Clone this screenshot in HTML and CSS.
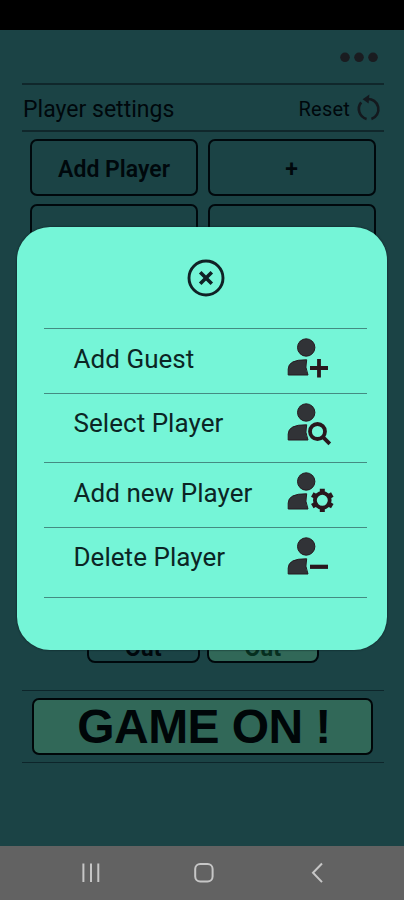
FILE: index.html
```html
<!DOCTYPE html>
<html lang="en">
<head>
<meta charset="utf-8">
<title>Player settings</title>
<link rel="stylesheet" href="styles.css">
</head>
<body>
<div class="phone">
  <div class="status"></div>
  <main class="app">
    <div class="topbar">
      <svg width="40" height="12" viewBox="0 0 40 12" fill="#1a1c20"><circle cx="6" cy="6.3" r="4.8"/><circle cx="20" cy="6.3" r="4.8"/><circle cx="34" cy="6.3" r="4.8"/></svg>
    </div>
    <div class="heading">
      <span class="title">Player settings</span>
      <span class="reset">Reset</span>
      <svg class="reset-icon" width="26" height="28" viewBox="0 0 26 28"><path d="M10.6 25A10.4 10.4 0 0 1 5.2 8.4M11 5A10.3 10.3 0 0 1 15.4 25" fill="none" stroke="#14191e" stroke-width="2.6"/><path d="M6.6 5.2L13.4 .6L12.6 9.6Z" fill="#14191e"/></svg>
    </div>
    <div class="players">
      <div class="box">Add Player</div><div class="box">+</div>
      <div class="box"></div><div class="box"></div>
    </div>
    <div class="modes"><div class="mode">Out</div><div class="mode on">Out</div></div>
    <div class="start"><div class="go">GAME ON !</div></div>
  </main>
  <nav class="nav">
    <svg width="404" height="54" viewBox="0 0 404 54" fill="none" stroke="#c6c6c6" stroke-width="2"><path d="M83.4 17.5v18.5M91 17.5v18.5M98.3 17.5v18.5"/><rect x="195.2" y="18" width="17.4" height="17.4" rx="5"/><path d="M322 17.5l-9 9.2 9 9.4"/></svg>
  </nav>
</div>
<div class="modal">
  <svg class="close" width="38" height="38" viewBox="0 0 38 38" fill="none" stroke="#102125"><circle cx="19" cy="19" r="17" stroke-width="2.9"/><path d="M13.2 13.2l11.6 11.6M24.8 13.2L13.2 24.8" stroke-width="3.6"/></svg>
  <div class="menu">
    <div class="item guest"><span>Add Guest</span>
      <svg width="50" height="44" viewBox="0 0 50 44"><g fill="#313337" stroke="#271a20"><circle cx="20.2" cy="12.5" r="8.7"/><path d="M2.2 40V34Q2.2 24.5 20.7 24.8Q18.5 32 22 40Z"/></g><path d="M33 24v18.5M24 33h18" stroke="#29171d" stroke-width="3.8"/></svg></div>
    <div class="item select"><span>Select Player</span>
      <svg width="50" height="44" viewBox="0 0 50 44"><g fill="#313337" stroke="#271a20"><circle cx="20.2" cy="12.5" r="8.7"/><path d="M2.2 40V34Q2.2 24.5 20.7 24.8Q18.5 32 22 40Z"/></g><circle cx="31.5" cy="31.5" r="10.5" fill="#75f5d7"/><g fill="none" stroke="#29171d" stroke-width="3.8"><circle cx="31.5" cy="31.5" r="7.5"/><path d="M36.8 36.8l7 7"/></g></svg></div>
    <div class="item new"><span>Add new Player</span>
      <svg width="50" height="44" viewBox="0 0 50 44"><g fill="#313337" stroke="#271a20"><circle cx="20.2" cy="12.5" r="8.7"/><path d="M2.2 40V34Q2.2 24.5 20.7 24.8Q18.5 32 22 40Z"/></g><g stroke="#29171d"><path d="M36.3 19.7v23.2M26.3 25.5l20 11.6M46.3 25.5l-20 11.6" stroke-width="5"/><circle cx="36.3" cy="31.3" r="7.4" fill="#75f5d7" stroke-width="3.8"/></g></svg></div>
    <div class="item delete"><span>Delete Player</span>
      <svg width="50" height="44" viewBox="0 0 50 44"><g fill="#313337" stroke="#271a20"><circle cx="20.2" cy="12.5" r="8.7"/><path d="M2.2 40V34Q2.2 24.5 20.7 24.8Q18.5 32 22 40Z"/></g><path d="M24 32.8h18" stroke="#29171d" stroke-width="4.2"/></svg></div>
  </div>
</div>
</body>
</html>
```
FILE: styles.css
```css
* { box-sizing: border-box; }
body { margin: 0; font-family: Roboto, sans-serif; color: #00080c; }
.phone { display: flex; flex-direction: column; height: 900px; overflow: hidden; }
.status { height: 30px; background: #000; }
.app { flex: 1; display: flex; flex-direction: column; padding: 0 20px 83px 22px; background: #1b4345; }
.topbar { height: 53px; display: flex; justify-content: flex-end; align-items: center; padding: 1px 5.5px 0 0; }
.heading { height: 49px; display: flex; align-items: center; border-top: 2px solid #10272b; border-bottom: 2px solid #10272b; padding: 3px 2px 0 1px; }
.title { font-size: 23px; letter-spacing: .02px; margin-top: 1px; }
.reset { margin-left: auto; font-size: 20px; letter-spacing: .2px; }
.reset-icon { margin: -3px 0 0 6px; }
.players { display: grid; grid-template-columns: 168px 168px; grid-auto-rows: 57px; gap: 7.5px 9.5px; padding: 7px 0 0 8px; }
.box { display: flex; align-items: center; justify-content: center; border: 2px solid #00080c; border-radius: 7px; font-size: 23px; font-weight: 600; padding-top: 3px; }
.modes { margin-top: auto; display: flex; gap: 7px; padding-left: 65px; }
.mode { width: 112.5px; height: 48px; border: 2px solid #00080c; border-radius: 8px; font-size: 23px; font-weight: 700; line-height: 64px; text-align: center; }
.mode.on { background: #316858; color: #062f20; border-color: #00080c; }
.start { margin-top: 27px; height: 73.5px; border-top: 1.5px solid #0d252a; border-bottom: 1.5px solid #0d252a; padding: 7px 11px 0 10px; }
.go { height: 57px; border: 2.5px solid #000608; border-radius: 7px; background: #316858; font: bold 48px/53px "Liberation Sans", Arial, sans-serif; letter-spacing: -.6px; padding-left: 3px; text-align: center; white-space: nowrap; color: #000608; }
.nav { height: 54px; background: #626262; }
.nav svg { display: block; }
.modal { position: absolute; left: 17px; top: 227px; width: 370px; height: 423px; border-radius: 33px; background: #75f5d7; box-shadow: 0 0 2px #07191c; display: flex; flex-direction: column; align-items: center; padding-top: 32px; }
.close { display: block; margin-left: 8px; }
.menu { width: 323px; margin: 31px 0 0 7px; border-top: 1.5px solid #448b82; }
.item { display: flex; align-items: flex-start; justify-content: space-between; border-bottom: 1.5px solid #448b82; padding: 6px 31.5px 0 29.5px; }
.item span { font-size: 26px; line-height: 30px; margin-top: 9px; white-space: nowrap; color: #0b2524; letter-spacing: .04px; }
.item svg { flex: none; overflow: visible; }
.guest { height: 65px; }
.select { height: 69px; }
.select span, .delete span { margin-top: 8px; }
.new { height: 65px; }
.delete { height: 70px; }
```
